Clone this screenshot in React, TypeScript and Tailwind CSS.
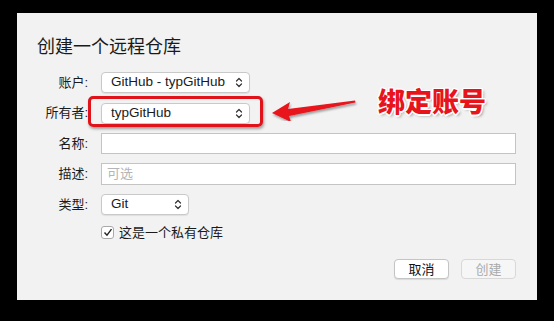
import React from 'react';

const cjk = { fontFamily: '"Liberation Sans", "Noto Sans CJK SC", sans-serif' };

function Chevrons() {
  return (
    <svg width="8" height="11" viewBox="0 0 8 11" fill="none" stroke="#333" strokeWidth="1.2" strokeLinecap="round" strokeLinejoin="round">
      <path d="M1.5 4 L4 1.5 L6.5 4" />
      <path d="M1.5 7 L4 9.5 L6.5 7" />
    </svg>
  );
}

function Select({ value, width }: { value: string; width: string }) {
  return (
    <div
      className={`${width} h-[21px] flex items-center justify-between bg-white border border-[#c9c9c9] rounded-[4px] pl-[9px] pr-[6px] shadow-[0_1px_1px_rgba(0,0,0,0.08)] text-[13.5px] text-[#1a1a1a]`}
    >
      <span>{value}</span>
      <Chevrons />
    </div>
  );
}

function Row({ label, children }: { label: string; children: React.ReactNode }) {
  return (
    <div className="flex items-center h-[21px]">
      <div className="w-[51px] text-right text-[13px] text-[#1a1a1a]">{label}</div>
      <div className="ml-[13px] flex-1">{children}</div>
    </div>
  );
}

export default function App() {
  return (
    <div className="w-[554px] h-[321px] bg-black pt-[13px] pl-[17px]" style={cjk}>
      <div className="relative w-[520px] h-[287px] bg-[#f2f2f2] pt-[22px] pl-[20px] pr-[21px] flex flex-col">
        <h1 className="text-[18px] leading-[24px] text-[#1a1a1a]">创建一个远程仓库</h1>

        <div className="mt-[13px] flex flex-col gap-[9.5px]">
          <Row label="账户:">
            <Select value="GitHub - typGitHub" width="w-[149px]" />
          </Row>
          <Row label="所有者:">
            <Select value="typGitHub" width="w-[149px]" />
          </Row>
          <Row label="名称:">
            <div className="h-[21px] bg-white border border-[#c4c4c4]" />
          </Row>
          <Row label="描述:">
            <div className="h-[22px] bg-white border border-[#c4c4c4] pl-[5px] text-[13px] leading-[20px] text-[#b5b5b5]">可选</div>
          </Row>
          <Row label="类型:">
            <Select value="Git" width="w-[88px]" />
          </Row>
          <div className="flex items-center h-[14px] mt-[1px] ml-[64px] gap-[5px] text-[13px] text-[#1a1a1a]">
            <div className="w-[13px] h-[13px] bg-white border border-[#a9a9a9] rounded-[3px] flex items-center justify-center">
              <svg width="10" height="9" viewBox="0 0 10 9" fill="none" stroke="#222" strokeWidth="1.4">
                <path d="M1.5 4.5 L4 7.2 L8.5 1.2" />
              </svg>
            </div>
            <span>这是一个私有仓库</span>
          </div>
        </div>

        <div className="mt-auto mb-[21px] flex justify-end gap-[12px] text-[13px]">
          <button className="w-[55px] h-[20px] bg-white border border-[#c4c4c4] rounded-[4px] shadow-[0_1px_1px_rgba(0,0,0,0.1)] text-[#111]">取消</button>
          <button className="w-[55px] h-[20px] bg-[#f6f6f6] border border-[#d8d8d8] rounded-[4px] text-[#aaa]">创建</button>
        </div>

        {/* annotation: red box */}
        <div className="absolute left-[71px] top-[83px] w-[175px] h-[31px] border-[3px] border-[#e0121a] rounded-[5px] shadow-[1px_2px_3px_rgba(0,0,0,0.35)]" />

        {/* annotation: arrow */}
        <svg className="absolute left-[250px] top-[84px]" width="95" height="24" viewBox="0 0 95 24">
          <defs>
            <filter id="sh" x="-10%" y="-30%" width="130%" height="180%">
              <feDropShadow dx="1" dy="2" stdDeviation="1.2" floodColor="#000" floodOpacity="0.35" />
            </filter>
          </defs>
          <path d="M5 16 L23 5 L21 12 L88 3.5 L88.5 5.5 L22 19 L24 25 Z" fill="#e8141c" filter="url(#sh)" />
        </svg>

        {/* annotation: text */}
        <div
          className="absolute left-[361px] top-[72px] text-[27px] leading-[32px] font-black text-[#e8141c]"
          style={{
            fontFamily: '"Noto Sans CJK SC", sans-serif',
            textShadow:
              '1.5px 0 0 #fff, -1.5px 0 0 #fff, 0 1.5px 0 #fff, 0 -1.5px 0 #fff, 1px 1px 0 #fff, -1px -1px 0 #fff, 1px -1px 0 #fff, -1px 1px 0 #fff, 2px 2px 3px rgba(0,0,0,0.35)',
          }}
        >
          绑定账号
        </div>
      </div>
    </div>
  );
}
